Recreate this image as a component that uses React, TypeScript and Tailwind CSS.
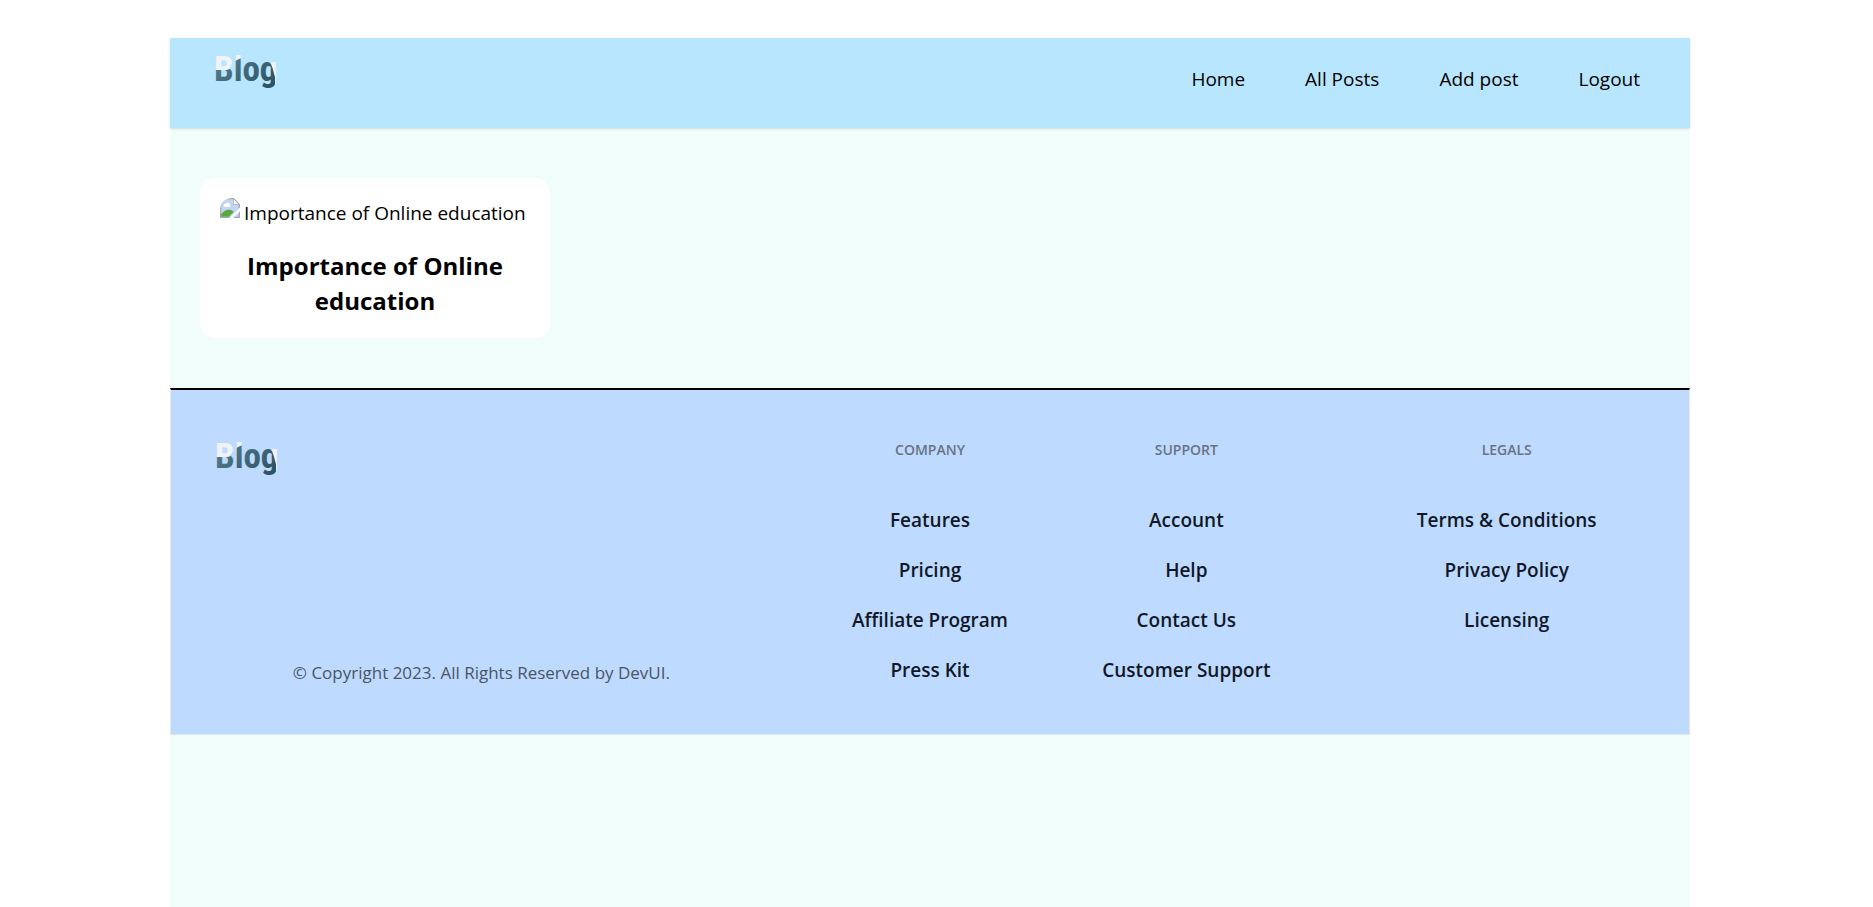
import React from "react";

function Logo({ id }: { id: string }) {
  return (
    <svg width="68" height="48" viewBox="0 0 68 48" role="img" aria-label="Blog" className="block overflow-visible">
      <defs>
        <linearGradient id={`${id}-ink`} x1="0" y1="0" x2="1" y2="1">
          <stop offset="0" stopColor="#5d8496" />
          <stop offset="1" stopColor="#1c4252" />
        </linearGradient>
        <pattern id={`${id}-fill`} x="-4" y="-8" width="80" height="64" patternUnits="userSpaceOnUse">
          <rect width="80" height="64" fill="#f1f3f4" />
          <path
            d="M0 25 H18 C24 25 22 19 29 15 C37 11 52 9 59 14 C64 18 65 25 67 32 V64 H0 Z"
            fill={`url(#${id}-ink)`}
          />
        </pattern>
      </defs>
      <text
        x="2"
        y="28"
        fill={`url(#${id}-fill)`}
        fontFamily="'Liberation Sans Narrow','Roboto Condensed','Liberation Sans',sans-serif"
        fontWeight="700"
        fontSize="35"
      >
        Blog
      </text>
    </svg>
  );
}

function BrokenImage() {
  return (
    <svg width="20" height="20" viewBox="0 0 16 16" aria-hidden="true" className="block shrink-0 rounded-tl-xl">
      <path d="M0 0H11L16 5V16H0Z" fill="#a9a9a9" />
      <path d="M1 1H10.5V5.5H15V15H1Z" fill="#c3d4f5" />
      <path d="M11 1.2V5H14.8Z" fill="#fff" />
      <path d="M3 6.5a1.5 1.5 0 0 1 1.5-2 2 2 0 0 1 3.5 1 1 1 0 0 1 0 1.5H3Z" fill="#fff" />
      <path d="M1 15V13C4 9 8 8.500 11 11L7 15Z" fill="#55a839" />
      <path d="M16 7.500L7.500 16H10.500L16 10.500Z" fill="#fff" />
    </svg>
  );
}

const navItems = ["Home", "All Posts", "Add post", "Logout"];

const columns = [
  { title: "Company", width: "w-2/12", links: ["Features", "Pricing", "Affiliate Program", "Press Kit"] },
  { title: "Support", width: "w-2/12", links: ["Account", "Help", "Contact Us", "Customer Support"] },
  { title: "Legals", width: "w-3/12", links: ["Terms & Conditions", "Privacy Policy", "Licensing"] },
];

export default function App() {
  return (
    <div className="flex min-h-screen flex-col bg-white pt-[38px] pr-[13px] font-['Open_Sans','Noto_Sans',sans-serif] text-[19px] leading-[30px] text-black">
      <div className="mx-auto w-full max-w-[1520px] flex-1 bg-[#f0fdfa]">
        <header className="flex h-[90px] items-start justify-between bg-[#b8e6fe] px-5 py-[15px] shadow">
          <a href="#home" className="ml-[22px]">
            <Logo id="header-logo" />
          </a>
          <nav>
            <ul className="flex">
              {navItems.map((item) => (
                <li key={item}>
                  <button type="button" className="rounded-full px-[30px] py-[11px]">{item}</button>
                </li>
              ))}
            </ul>
          </nav>
        </header>

        <main className="px-[30px] py-[50px]">
          <a href="#post" className="block w-[350px] rounded-[15px] bg-white p-5 text-center">
            <div className="mb-5 flex h-[30px] gap-1">
              <BrokenImage />
              <span className="whitespace-nowrap">Importance of Online education</span>
            </div>
            <h2 className="text-[24px] leading-[35px] font-bold">Importance of Online education</h2>
          </a>
        </main>

        <footer className="border border-t-2 border-gray-200 border-t-black bg-[#bedbff] px-5 pt-[50px] pb-[49px]">
          <div className="-mx-[30px] flex">
            <div className="flex w-5/12 flex-col justify-between px-[30px]">
              <a href="#home" className="ml-[22px] self-start">
                <Logo id="footer-logo" />
              </a>
              <p className="text-center text-[17px] leading-[25px] text-gray-600">
                © Copyright 2023. All Rights Reserved by DevUI.
              </p>
            </div>
            {columns.map((column) => (
              <div key={column.title} className={`${column.width} text-center`}>
                <h3 className="mb-[45px] text-[14px] leading-5 font-semibold text-gray-500 uppercase">{column.title}</h3>
                <ul className="flex flex-col gap-5">
                  {column.links.map((link) => (
                    <li key={link}>
                      <a href="#link" className="font-semibold whitespace-nowrap text-gray-900">{link}</a>
                    </li>
                  ))}
                </ul>
              </div>
            ))}
          </div>
        </footer>
      </div>
    </div>
  );
}
